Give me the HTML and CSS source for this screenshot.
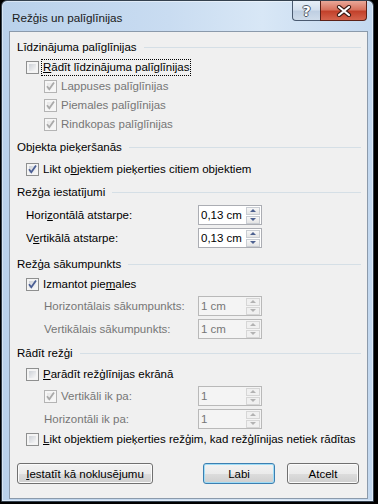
FILE: index.html
```html
<!DOCTYPE html>
<html lang="lv">
<head>
    <meta charset="UTF-8">
    <title>Režģis un palīglīnijas</title>
    <link rel="stylesheet" href="styles.css">
</head>
<body>
<div class="window">
    <div class="titlebar">
        <span class="title">Režģis un palīglīnijas</span>
        <div class="caption-buttons">
            <span class="cap-btn help">?</span>
            <span class="cap-btn close">
                <svg width="16" height="12" viewBox="0 0 16 12">
                    <path d="M3 2 L13 10 M13 2 L3 10" stroke="#3b1a14" stroke-width="4.2" stroke-linecap="round"/>
                    <path d="M3 2 L13 10 M13 2 L3 10" stroke="#fff" stroke-width="2.2" stroke-linecap="round"/>
                </svg>
            </span>
        </div>
    </div>

    <div class="client">
        <!-- Līdzinājuma palīglīnijas -->
        <div class="group-head mt6">Līdzinājuma palīglīnijas</div>
        <div class="row lvl1 mt1">
            <span class="cb"></span>
            <span class="label focus"><u>R</u>ādīt līdzinājuma palīglīnijas</span>
        </div>
        <div class="row lvl2">
            <span class="cb disabled"><svg viewBox="0 0 11 11"><path d="M2 5.2 L4.3 8.2 L9 1.6"/></svg></span>
            <span class="label gray">Lappuses palīglīnijas</span>
        </div>
        <div class="row lvl2">
            <span class="cb disabled"><svg viewBox="0 0 11 11"><path d="M2 5.2 L4.3 8.2 L9 1.6"/></svg></span>
            <span class="label gray">Piemales palīglīnijas</span>
        </div>
        <div class="row lvl2">
            <span class="cb disabled"><svg viewBox="0 0 11 11"><path d="M2 5.2 L4.3 8.2 L9 1.6"/></svg></span>
            <span class="label gray">Rindkopas palīglīnijas</span>
        </div>

        <!-- Objekta pieķeršanās -->
        <div class="group-head mt4">Objekta pieķeršanās</div>
        <div class="row lvl1 mt3">
            <span class="cb"><svg viewBox="0 0 11 11"><path d="M2 5.2 L4.3 8.2 L9 1.6"/></svg></span>
            <span class="label">Likt o<u>b</u>jektiem pieķerties citiem objektiem</span>
        </div>

        <!-- Režģa iestatījumi -->
        <div class="group-head mt4">Režģa iestatījumi</div>
        <div class="spin-row lvl1 mt3">
            <span class="label">Hori<u>z</u>ontālā atstarpe:</span>
            <div class="spin"><span class="val">0,13 cm</span><span class="arrows"><span class="up"></span><span class="down"></span></span></div>
        </div>
        <div class="spin-row lvl1 mt3">
            <span class="label">V<u>e</u>rtikālā atstarpe:</span>
            <div class="spin"><span class="val">0,13 cm</span><span class="arrows"><span class="up"></span><span class="down"></span></span></div>
        </div>

        <!-- Režģa sākumpunkts -->
        <div class="group-head mt7">Režģa sākumpunkts</div>
        <div class="row lvl1 mt1">
            <span class="cb"><svg viewBox="0 0 11 11"><path d="M2 5.2 L4.3 8.2 L9 1.6"/></svg></span>
            <span class="label">Izmantot pie<u>m</u>ales</span>
        </div>
        <div class="spin-row lvl2 mt2">
            <span class="label gray">Horizontālais sākumpunkts:</span>
            <div class="spin disabled"><span class="val">1 cm</span><span class="arrows"><span class="up"></span><span class="down"></span></span></div>
        </div>
        <div class="spin-row lvl2 mt3">
            <span class="label gray">Vertikālais sākumpunkts:</span>
            <div class="spin disabled"><span class="val">1 cm</span><span class="arrows"><span class="up"></span><span class="down"></span></span></div>
        </div>

        <!-- Rādīt režģi -->
        <div class="group-head mt5">Rādīt režģi</div>
        <div class="row lvl1 mt2">
            <span class="cb"></span>
            <span class="label"><u>P</u>arādīt režģlīnijas ekrānā</span>
        </div>
        <div class="spin-row lvl2 mt2">
            <span class="check-label">
                <span class="cb disabled"><svg viewBox="0 0 11 11"><path d="M2 5.2 L4.3 8.2 L9 1.6"/></svg></span>
                <span class="label gray">Vertikāli ik pa:</span>
            </span>
            <div class="spin disabled"><span class="val">1</span><span class="arrows"><span class="up"></span><span class="down"></span></span></div>
        </div>
        <div class="spin-row lvl2 mt3">
            <span class="label gray">Horizontāli ik pa:</span>
            <div class="spin disabled"><span class="val">1</span><span class="arrows"><span class="up"></span><span class="down"></span></span></div>
        </div>
        <div class="row lvl1 mt1">
            <span class="cb"></span>
            <span class="label"><u>L</u>ikt objektiem pieķerties režģim, kad režģlīnijas netiek rādītas</span>
        </div>

        <div class="button-row">
            <button class="btn wide"><u>I</u>estatīt kā noklusējumu</button>
            <button class="btn default">Labi</button>
            <button class="btn">Atcelt</button>
        </div>
    </div>
</div>
</body>
</html>
```

FILE: styles.css
```css
/* pamata fons un fonts */
body {
    margin: 0;
    background-color: #000;
    font-family: "Liberation Sans", Arial, sans-serif;
    font-size: 11.5px;
    color: #000;
}

u {
    text-decoration: underline;
    text-underline-offset: 1px;
}

/* Win7 Aero loga rāmis */
.window {
    margin-left: 1px;
    width: 373px;
    height: 502px;
    box-sizing: border-box;
    border: 1px solid #34414f;
    border-radius: 6px 6px 0 0;
    background: linear-gradient(to right, #b9d1eb 0%, #c9dcf1 45%, #d8e7f6 70%, #c3d8ef 100%);
    box-shadow: inset 0 0 0 1px rgba(255, 255, 255, 0.45);
    display: flex;
    flex-direction: column;
}

.titlebar {
    height: 30px;
    display: flex;
    align-items: flex-start;
    padding-left: 10px;
}

.title {
    margin-top: 9px;
    font-size: 11.7px;
    line-height: 15px;
    color: #1a1a1a;
}

.caption-buttons {
    margin-left: auto;
    margin-right: 6px;
    display: flex;
}

.cap-btn {
    height: 20px;
    box-sizing: border-box;
    border: 1px solid #4a5a70;
    border-top: none;
    display: flex;
    align-items: center;
    justify-content: center;
}

.help {
    width: 28px;
    border-right: none;
    border-radius: 0 0 0 4px;
    background: linear-gradient(#e6eef7 0%, #d4e0ee 45%, #bfcfe2 55%, #cfdcea 100%);
    color: #fff;
    font-weight: bold;
    font-size: 14px;
    font-family: "DejaVu Sans", sans-serif;
    text-shadow: 1px 0 #4d5866, -1px 0 #4d5866, 0 1px #4d5866, 0 -1px #4d5866;
}

.close {
    width: 47px;
    border-color: #5b2118;
    border-radius: 0 0 4px 0;
    background: linear-gradient(#e9a899 0%, #d8735f 45%, #c2412b 55%, #d5644d 100%);
}

.close svg {
    display: block;
}

/* dialoga klienta laukums */
.client {
    flex: 1;
    margin: 0 5px 2px 7px;
    border: 1px solid #8b9aab;
    background-color: #f0f0f0;
    padding: 0 6px 0 7px;
    display: flex;
    flex-direction: column;
}

.group-head {
    height: 19px;
    line-height: 19px;
    display: flex;
    align-items: center;
    gap: 7px;
}

.group-head::after {
    content: "";
    flex: 1;
    height: 1px;
    background-color: #d5dfe6;
    margin-top: -1px;
}

.row {
    height: 19px;
    display: flex;
    align-items: center;
}

.lvl1 {
    padding-left: 9px;
}

.lvl2 {
    padding-left: 27px;
}

.label {
    line-height: 15px;
    margin-left: 4px;
    white-space: nowrap;
}

.spin-row > .label {
    margin-left: 0;
}

.gray {
    color: #767676;
}

.focus {
    margin-left: 2px;
    padding: 0 1px;
    border: 1px dotted #000;
}

/* izvēles rūtiņas */
.cb {
    width: 13px;
    height: 13px;
    flex: none;
    box-sizing: border-box;
    border: 1px solid #8e8f8f;
    padding: 2px;
    background: linear-gradient(135deg, #cdd1d7, #f7f7f7) content-box, #f4f4f4;
}

.cb svg {
    display: block;
    width: 11px;
    height: 11px;
    margin: -2px;
    fill: none;
    stroke: #4a5e94;
    stroke-width: 1.8;
}

.cb.disabled {
    border-color: #b4b4b4;
    background: linear-gradient(135deg, #e6e6e6, #f8f8f8) content-box, #f6f6f6;
}

.cb.disabled svg {
    stroke: #a9a9a9;
}

.check-label {
    display: flex;
    align-items: center;
}

/* skaitļu lauki ar bultiņām */
.spin-row {
    height: 20px;
    display: grid;
    grid-template-columns: 172px 64px;
    align-items: center;
}

.spin-row.lvl2 {
    grid-template-columns: 154px 64px;
}

.spin {
    height: 20px;
    box-sizing: border-box;
    border: 1px solid #abadb3;
    background-color: #fff;
    display: flex;
    align-items: center;
}

.spin .val {
    flex: 1;
    padding-left: 2px;
    line-height: 15px;
}

.arrows {
    width: 14px;
    margin-right: 1px;
    display: flex;
    flex-direction: column;
    gap: 1px;
}

.arrows span {
    height: 8px;
    box-sizing: border-box;
    border: 1px solid #c9cdd3;
    background: linear-gradient(#f7f7f7, #e4e4e4);
    display: flex;
    align-items: center;
    justify-content: center;
}

.arrows .up::before,
.arrows .down::before {
    content: "";
    width: 0;
    height: 0;
    border-left: 3px solid transparent;
    border-right: 3px solid transparent;
}

.arrows .up::before {
    border-bottom: 3px solid #4d6190;
}

.arrows .down::before {
    border-top: 3px solid #4d6190;
}

.spin.disabled {
    border-color: #b9b9b9;
    background-color: #f4f4f4;
}

.spin.disabled .val {
    color: #767676;
}

.spin.disabled .arrows span {
    border-color: #d6d6d6;
    background: #f0f0f0;
}

.spin.disabled .up::before {
    border-bottom-color: #b2b2b2;
}

.spin.disabled .down::before {
    border-top-color: #b2b2b2;
}

/* atstarpes starp rindām */
.mt1 { margin-top: 1px; }
.mt2 { margin-top: 2px; }
.mt3 { margin-top: 3px; }
.mt4 { margin-top: 4px; }
.mt5 { margin-top: 5px; }
.mt6 { margin-top: 6px; }
.mt7 { margin-top: 7px; }

/* pogas */
.button-row {
    margin-top: 14px;
    display: flex;
    gap: 12px;
    padding-right: 2px;
}

.btn {
    width: 72px;
    height: 21px;
    padding: 0;
    font-family: inherit;
    font-size: inherit;
    color: #000;
    border: 1px solid #707070;
    border-radius: 3px;
    background: linear-gradient(#f2f2f2 0%, #ebebeb 50%, #dddddd 51%, #cfcfcf 100%);
    box-shadow: inset 0 0 0 1px #fbfbfb;
}

.btn.wide {
    width: 136px;
    margin-right: auto;
}

.btn.default {
    border-color: #3c7fb1;
    box-shadow: inset 0 0 0 1px #9fdcf6;
}
```
